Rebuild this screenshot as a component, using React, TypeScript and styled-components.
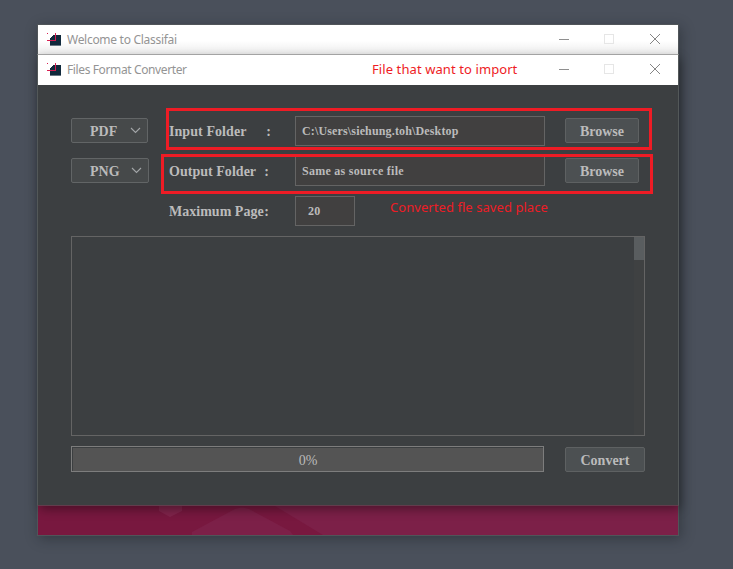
import React from "react";
import styled, { createGlobalStyle } from "styled-components";

const GlobalStyle = createGlobalStyle`
  * { box-sizing: border-box; }
  body { margin: 0; background: #4a505b; overflow: hidden; }
`;

const serif = '"Liberation Serif", "Times New Roman", serif';
const sans = '"Noto Sans", "Open Sans", sans-serif';

const Desktop = styled.main`
  width: 733px;
  height: 569px;
  padding: 24px 0 0 37px;
  background: #4a505b;
`;

const WelcomeWindow = styled.section`
  position: relative;
  width: 642px;
  height: 512px;
  border: 1px solid #505559;
  background: #78183f;
  box-shadow: 2px 3px 12px rgba(20, 24, 30, 0.4);
`;

const TitleBar = styled.header<{ $behind?: boolean }>`
  height: ${(p) => (p.$behind ? 29 : 30)}px;
  display: flex;
  align-items: flex-start;
  justify-content: space-between;
  padding-left: 9px;
  background: ${(p) => (p.$behind ? "linear-gradient(#fff 55%, #ececec)" : "#fff")};
`;

const TitleGroup = styled.div`
  display: flex;
  align-items: flex-start;
`;

const Title = styled.h1<{ $spacing: number }>`
  margin: 7px 0 0 5px;
  font: 400 12px/16px ${sans};
  letter-spacing: ${(p) => p.$spacing}px;
  color: #949494;
  white-space: nowrap;
`;

const Logo = styled.svg`
  display: block;
  width: 15px;
  height: 15px;
  margin-top: 7px;
`;

const Controls = styled.svg`
  display: block;
  width: 138px;
  height: 29px;
`;

const ConverterWindow = styled.section`
  position: relative;
  margin: 0 -1px;
  width: 642px;
  height: 452px;
  border: 1px solid #535859;
  border-top-color: #a3a3a3;
  border-bottom-color: #633c4c;
  background: #3c3f41;
  box-shadow: 2px 4px 10px -1px rgba(0, 0, 0, 0.4);
`;

const Banner = styled.svg`
  display: block;
  width: 640px;
  height: 29px;
`;

const Body = styled.div`
  padding: 26px 33px 0;
`;

const FormGrid = styled.div`
  display: grid;
  grid-template-columns: 98px 126px 270px 80px;
  grid-template-rows: repeat(3, 40px);
  align-items: center;
  height: 125px;
`;

const Combo = styled.button<{ $width: number }>`
  display: flex;
  align-items: center;
  justify-content: space-between;
  width: ${(p) => p.$width}px;
  height: 25px;
  margin: 0 0 1px;
  padding: 2px 6px 0 18px;
  border: 1px solid #626566;
  border-radius: 2px;
  background: #46494a;
  color: #bbb;
  font: 700 14px/16px ${serif};
`;

const Chevron = styled.svg`
  width: 11px;
  height: 7px;
  margin-bottom: 3px;
`;

const Label = styled.label<{ $width: number }>`
  display: flex;
  justify-content: space-between;
  width: ${(p) => p.$width}px;
  padding-top: 2px;
  color: #bbb;
  font: 700 14px/16px ${serif};
  white-space: pre;
`;

const LabelText = styled.span<{ $spacing: number }>`
  letter-spacing: ${(p) => p.$spacing}px;
`;

const Field = styled.div<{ $width: number; $indent: number; $spacing: number }>`
  width: ${(p) => p.$width}px;
  height: 30px;
  padding-left: ${(p) => p.$indent}px;
  border: 1px solid #646464;
  background: #414040;
  color: #bbb;
  font: 700 12px/28px ${serif};
  letter-spacing: ${(p) => p.$spacing}px;
`;

const Button = styled.button<{ $width: number; $raised?: boolean }>`
  width: ${(p) => p.$width}px;
  height: 25px;
  margin: 0 0 ${(p) => (p.$raised ? 1 : 0)}px;
  padding: 2px 0 0;
  border: 1px solid #5e6162;
  border-radius: 2px;
  background: #4c5052;
  color: #bbb;
  font: 700 14px/21px ${serif};
`;

const LogArea = styled.div`
  display: flex;
  justify-content: flex-end;
  height: 200px;
  border: 1px solid #646464;
`;

const ScrollTrack = styled.div`
  width: 10px;
  background: #3f4142;
`;

const ScrollThumb = styled.div`
  height: 23px;
  background: #595d5f;
`;

const Footer = styled.footer`
  display: flex;
  justify-content: space-between;
  align-items: flex-end;
  height: 26px;
  margin-top: 10px;
`;

const Progress = styled.div`
  width: 473px;
  height: 26px;
  padding: 1px 0 0 1px;
  border: 1px solid #7d7d7d;
`;

const ProgressFace = styled.div`
  height: 23px;
  background: #545454;
  color: #bbb;
  font: 400 14px/25px ${serif};
  text-align: center;
`;

const Highlight = styled.div<{ $x: number; $y: number; $w: number; $h: number }>`
  position: absolute;
  left: ${(p) => p.$x}px;
  top: ${(p) => p.$y}px;
  width: ${(p) => p.$w}px;
  height: ${(p) => p.$h}px;
  border: 3px solid #ee1c25;
`;

const Note = styled.div<{ $x: number; $y: number; $spacing: number }>`
  position: absolute;
  left: ${(p) => p.$x}px;
  top: ${(p) => p.$y}px;
  font: 400 13px/18px ${sans};
  letter-spacing: ${(p) => p.$spacing}px;
  color: #ee1c25;
  white-space: nowrap;
`;

const AppLogo = () => (
  <Logo viewBox="0 0 15 15">
    <path d="M3 13V6H4V5H5V4H6V3H14V13Z" fill="#10293c" />
    <path d="M3 13.5H14" stroke="#687783" />
    <path d="M0 8.5H9M8.5 1V9" stroke="#d81e51" fill="none" />
    <path d="M0 1.5H1" stroke="#d81e51" />
  </Logo>
);

const WindowControls = () => (
  <Controls viewBox="0 0 138 29" fill="none">
    <path d="M19 14.5H29" stroke="#8f8f8f" shapeRendering="crispEdges" />
    <rect x="64.5" y="9.5" width="9" height="9" stroke="#e6e6e6" />
    <path d="M110 9L120 19M120 9L110 19" stroke="#858585" />
  </Controls>
);

const Arrow = () => (
  <Chevron viewBox="0 0 11 7" fill="none">
    <path d="M1 1L5.5 5.5L10 1" stroke="#a3a6a8" strokeWidth="1.1" />
  </Chevron>
);

export default function App() {
  return (
    <>
      <GlobalStyle />
      <Desktop>
        <WelcomeWindow>
          <TitleBar $behind>
            <TitleGroup><AppLogo /><Title $spacing={-0.29}>Welcome to Classifai</Title></TitleGroup>
            <WindowControls />
          </TitleBar>
          <ConverterWindow>
            <TitleBar>
              <TitleGroup><AppLogo /><Title $spacing={-0.38}>Files Format Converter</Title></TitleGroup>
              <WindowControls />
            </TitleBar>
            <Body>
              <FormGrid>
                <Combo $width={77}>PDF<Arrow /></Combo>
                <Label $width={102}><LabelText $spacing={0.07}>Input Folder</LabelText><span>:</span></Label>
                <Field $width={250} $indent={6} $spacing={0.15}>C:\Users\siehung.toh\Desktop</Field>
                <Button $width={74} $raised>Browse</Button>
                <Combo $width={78}>PNG<Arrow /></Combo>
                <Label $width={100}><LabelText $spacing={0.03}>Output Folder</LabelText><span>:</span></Label>
                <Field $width={250} $indent={6} $spacing={0.27}>Same as source file</Field>
                <Button $width={74} $raised>Browse</Button>
                <span />
                <Label $width={100}><LabelText $spacing={0.02}>Maximum Page</LabelText><span>:</span></Label>
                <Field $width={60} $indent={12} $spacing={0.2}>20</Field>
              </FormGrid>
              <LogArea><ScrollTrack><ScrollThumb /></ScrollTrack></LogArea>
              <Footer>
                <Progress><ProgressFace>0%</ProgressFace></Progress>
                <Button $width={80}>Convert</Button>
              </Footer>
            </Body>
            <Highlight $x={128} $y={53} $w={486} $h={42} />
            <Highlight $x={123} $y={99} $w={492} $h={40} />
            <Note $x={334} $y={5} $spacing={0.09}>File that want to import</Note>
            <Note $x={352} $y={143} $spacing={0.06}>Converted fle saved place</Note>
          </ConverterWindow>
          <Banner viewBox="0 0 640 29">
            <path d="M121 0H144V5L132 11L121 5Z" fill="#80244b" />
            <path d="M154 29V26L197 3Q204 0 211 3L252 25L255 29Z" fill="#7c2048" />
            <path d="M237 0H640V29H285Z" fill="#7c2048" />
          </Banner>
        </WelcomeWindow>
      </Desktop>
    </>
  );
}
